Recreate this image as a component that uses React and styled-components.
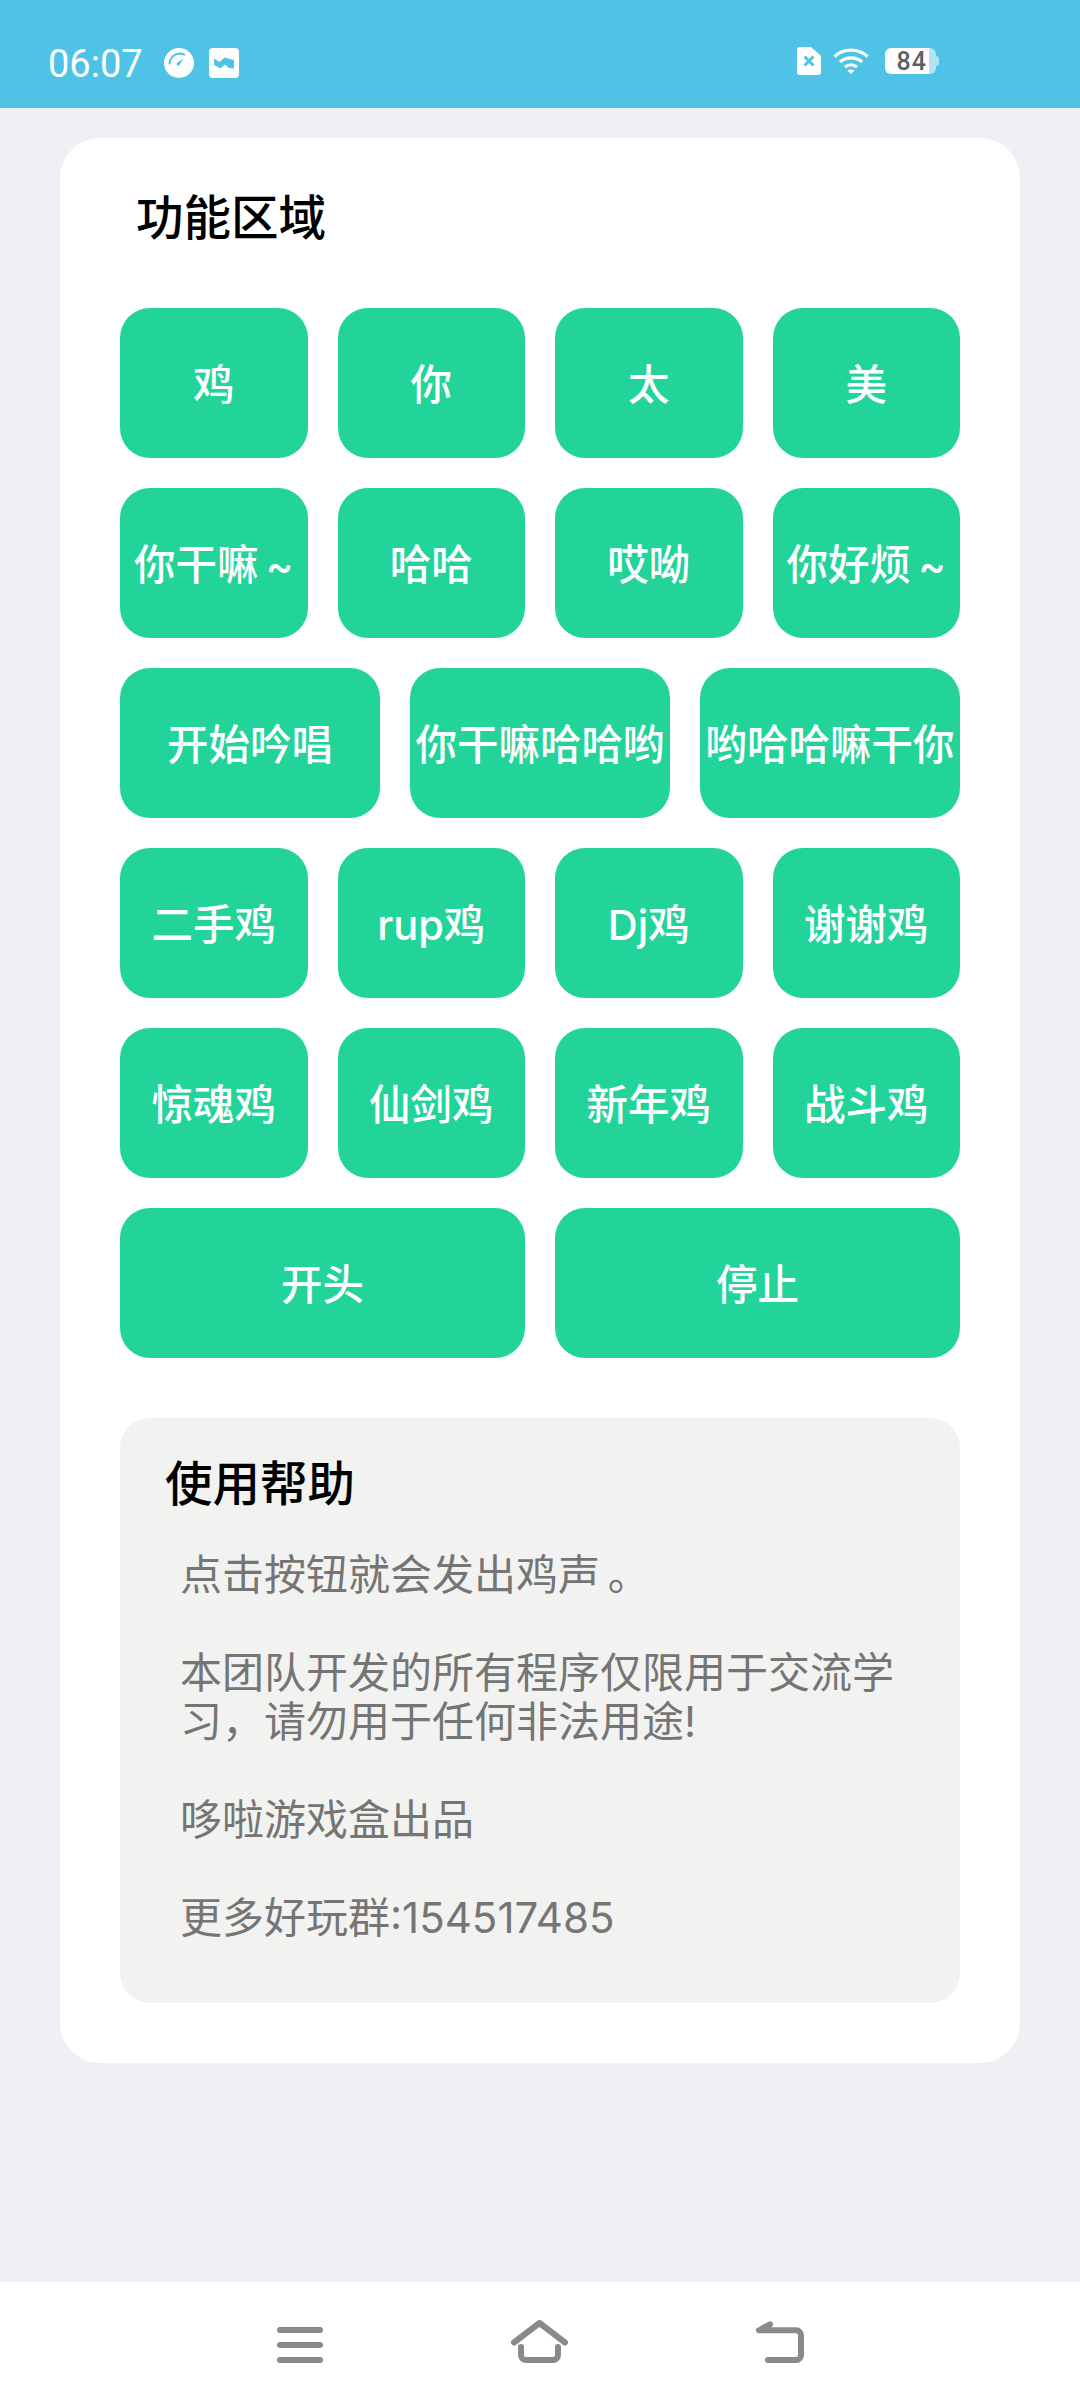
import styled, { createGlobalStyle } from 'styled-components';

const rows = [
  { columns: 4, labels: ['鸡', '你', '太', '美'] },
  { columns: 4, labels: ['你干嘛 ~', '哈哈', '哎呦', '你好烦 ~'] },
  { columns: 3, labels: ['开始吟唱', '你干嘛哈哈哟', '哟哈哈嘛干你'] },
  { columns: 4, labels: ['二手鸡', 'rup鸡', 'Dj鸡', '谢谢鸡'] },
  { columns: 4, labels: ['惊魂鸡', '仙剑鸡', '新年鸡', '战斗鸡'] },
  { columns: 2, labels: ['开头', '停止'] },
];

const App = () => (
  <Page>
    <GlobalStyle />
    <StatusBar>
      <StatusLeft>
        <Clock>06:07</Clock>
        <GaugeIcon />
        <MailIcon />
      </StatusLeft>
      <StatusRight>
        <SimIcon />
        <WifiIcon />
        <Battery>
          <BatteryLevel>84</BatteryLevel>
          <BatteryRest />
          <BatteryCap />
        </Battery>
      </StatusRight>
    </StatusBar>

    <Main>
      <Card>
        <CardTitle>功能区域</CardTitle>
        <ButtonGrid>
          {rows.map((row, i) => (
            <ButtonRow key={i} $columns={row.columns}>
              {row.labels.map(label => (
                <SoundButton key={label}>{label}</SoundButton>
              ))}
            </ButtonRow>
          ))}
        </ButtonGrid>
        <HelpBox>
          <HelpTitle>使用帮助</HelpTitle>
          <HelpText>
            <p>点击按钮就会发出鸡声 。</p>
            <p>本团队开发的所有程序仅限用于交流学习，请勿用于任何非法用途!</p>
            <p>哆啦游戏盒出品</p>
            <p>更多好玩群:154517485</p>
          </HelpText>
        </HelpBox>
      </Card>
    </Main>

    <NavBar>
      <MenuIcon />
      <HomeIcon />
      <BackIcon />
    </NavBar>
  </Page>
);
export default App;

const GaugeIcon = () => (
  <svg width="30" height="30" viewBox="0 0 30 30">
    <circle cx="15" cy="15" r="15" fill="#fff" />
    <path d="M5.500 15.500C5.800 10 10 5.800 16 5.600c1.500 0 3 .3 4.200 1" fill="none" stroke="#4fc3e6" strokeWidth="2" strokeLinecap="round" />
    <path d="M19.500 10.500l-6.200 4.200c-1 .8-.9 2 0 2.600.8.500 1.700.3 2.300-.6z" fill="#4fc3e6" />
  </svg>
);

const MailIcon = () => (
  <svg width="30" height="30" viewBox="0 0 30 30">
    <rect width="30" height="30" rx="4" fill="#fff" />
    <path d="M5 10.500l5.500 3.500L15.500 9.500 25 12v8.500l-5-.5-4-3.500-4.500 4L5 17z" fill="#4fc3e6" />
  </svg>
);

const SimIcon = () => (
  <svg width="24" height="28" viewBox="0 0 24 28">
    <path d="M3 0h11l10 9v16a3 3 0 0 1-3 3H3a3 3 0 0 1-3-3V3a3 3 0 0 1 3-3z" fill="#fff" />
    <path d="M7.500 9.500l9 9M16.500 9.500l-9 9" stroke="#4fc3e6" strokeWidth="3" />
  </svg>
);

const WifiIcon = () => (
  <svg width="36" height="28" viewBox="0 0 36 28" fill="none" stroke="#fff" strokeWidth="3.2">
    <path d="M1.500 9.500C10.500 1 25.500 1 34.500 9.500" />
    <path d="M7 15c6-5.500 16-5.500 22 0" />
    <path d="M12 20c3.500-3 8.500-3 12 0" />
    <path d="M14.500 23.500L18 27l3.500-3.500c-2-1.500-5-1.500-7 0z" fill="#fff" stroke="none" />
  </svg>
);

const MenuIcon = () => (
  <svg width="46" height="36" viewBox="0 0 46 36" fill="none" stroke="#8a8a8a" strokeWidth="6" strokeLinecap="round">
    <path d="M3 3h40M3 18h40M3 33h40" />
  </svg>
);

const HomeIcon = () => (
  <svg width="57" height="43" viewBox="0 0 57 43" fill="none" stroke="#8a8a8a" strokeWidth="6" strokeLinecap="round" strokeLinejoin="round">
    <path d="M3 22.500L28.500 3 54 22.500" />
    <path d="M10 27v8a5 5 0 0 0 5 5h27a5 5 0 0 0 5-5v-8" />
  </svg>
);

const BackIcon = () => (
  <svg width="48" height="42" viewBox="0 0 48 42" fill="none" stroke="#8a8a8a" strokeWidth="6" strokeLinecap="round" strokeLinejoin="round">
    <path d="M14 3.300L3 9.300H40a5 5 0 0 1 5 5V34a5 5 0 0 1-5 5H12" />
  </svg>
);

const GlobalStyle = createGlobalStyle`
  html, body {
    margin: 0;
    padding: 0;
    background: #efeff4;
  }
`;

const Page = styled.div`
  display: flex;
  flex-direction: column;
  width: 1080px;
  height: 2408px;
  overflow: hidden;
  background: #efeff4;
  font-family: 'Roboto', 'Noto Sans CJK SC', sans-serif;
`;

const StatusBar = styled.div`
  display: flex;
  justify-content: space-between;
  align-items: flex-start;
  box-sizing: border-box;
  flex: none;
  height: 108px;
  padding: 47px 141px 0 48px;
  background: #4fc3e6;
`;

const StatusLeft = styled.div`
  display: flex;
  align-items: center;
  gap: 15px;
`;

const Clock = styled.span`
  margin-right: 6px;
  padding-top: 2px;
  font-size: 38px;
  line-height: 30px;
  color: #fff;
`;

const StatusRight = styled.div`
  display: flex;
  align-items: center;
  gap: 12px;
`;

const Battery = styled.div`
  display: flex;
  align-items: center;
  margin-left: 4px;
`;

const BatteryLevel = styled.div`
  display: flex;
  align-items: center;
  justify-content: flex-end;
  box-sizing: border-box;
  width: 44px;
  height: 26px;
  padding-right: 2px;
  border-radius: 6px 0 0 6px;
  background: #fff;
  font-size: 25px;
  font-weight: 500;
  letter-spacing: 1px;
  color: #5f5f5f;
`;

const BatteryRest = styled.div`
  width: 7px;
  height: 26px;
  border-radius: 0 6px 6px 0;
  background: rgba(255, 255, 255, 0.55);
`;

const BatteryCap = styled.div`
  width: 3px;
  height: 10px;
  border-radius: 0 3px 3px 0;
  background: rgba(255, 255, 255, 0.55);
`;

const Main = styled.main`
  flex: 1;
  padding: 30px 60px 0;
`;

const Card = styled.section`
  box-sizing: border-box;
  height: 1925px;
  padding: 0 60px;
  border-radius: 40px;
  background: #fff;
`;

const CardTitle = styled.h2`
  margin: 0;
  padding: 46px 0 0 16px;
  height: 170px;
  box-sizing: border-box;
  font-size: 47.5px;
  font-weight: 500;
  line-height: 70px;
  color: #000;
`;

const ButtonGrid = styled.div`
  display: flex;
  flex-direction: column;
  gap: 30px;
`;

const ButtonRow = styled.div`
  display: grid;
  grid-template-columns: repeat(${p => p.$columns}, 1fr);
  gap: 30px;
`;

const SoundButton = styled.button`
  height: 150px;
  padding: 0 0 3px;
  border: none;
  border-radius: 30px;
  background: #23d49a;
  font-family: 'Inter', 'Noto Sans CJK SC', sans-serif;
  font-size: 41.5px;
  font-weight: 500;
  word-spacing: -4px;
  white-space: nowrap;
  color: #fff;
`;

const HelpBox = styled.div`
  box-sizing: border-box;
  height: 585px;
  margin-top: 60px;
  padding: 34px 45px 0;
  border-radius: 30px;
  background: #f2f3f1;
`;

const HelpTitle = styled.h3`
  margin: 0;
  font-size: 47.5px;
  font-weight: 500;
  line-height: 66px;
  color: #000;
`;

const HelpText = styled.div`
  margin-top: 32px;
  padding: 0 15px;
  font-family: 'Inter', 'Noto Sans CJK SC', sans-serif;
  font-size: 42px;
  line-height: 49px;
  word-spacing: -4px;
  color: #757575;

  p {
    margin: 0 0 49px;
  }
`;

const NavBar = styled.nav`
  display: flex;
  justify-content: space-between;
  align-items: flex-end;
  box-sizing: border-box;
  flex: none;
  height: 126px;
  padding: 0 276px 45px 277px;
  background: #fff;
`;
